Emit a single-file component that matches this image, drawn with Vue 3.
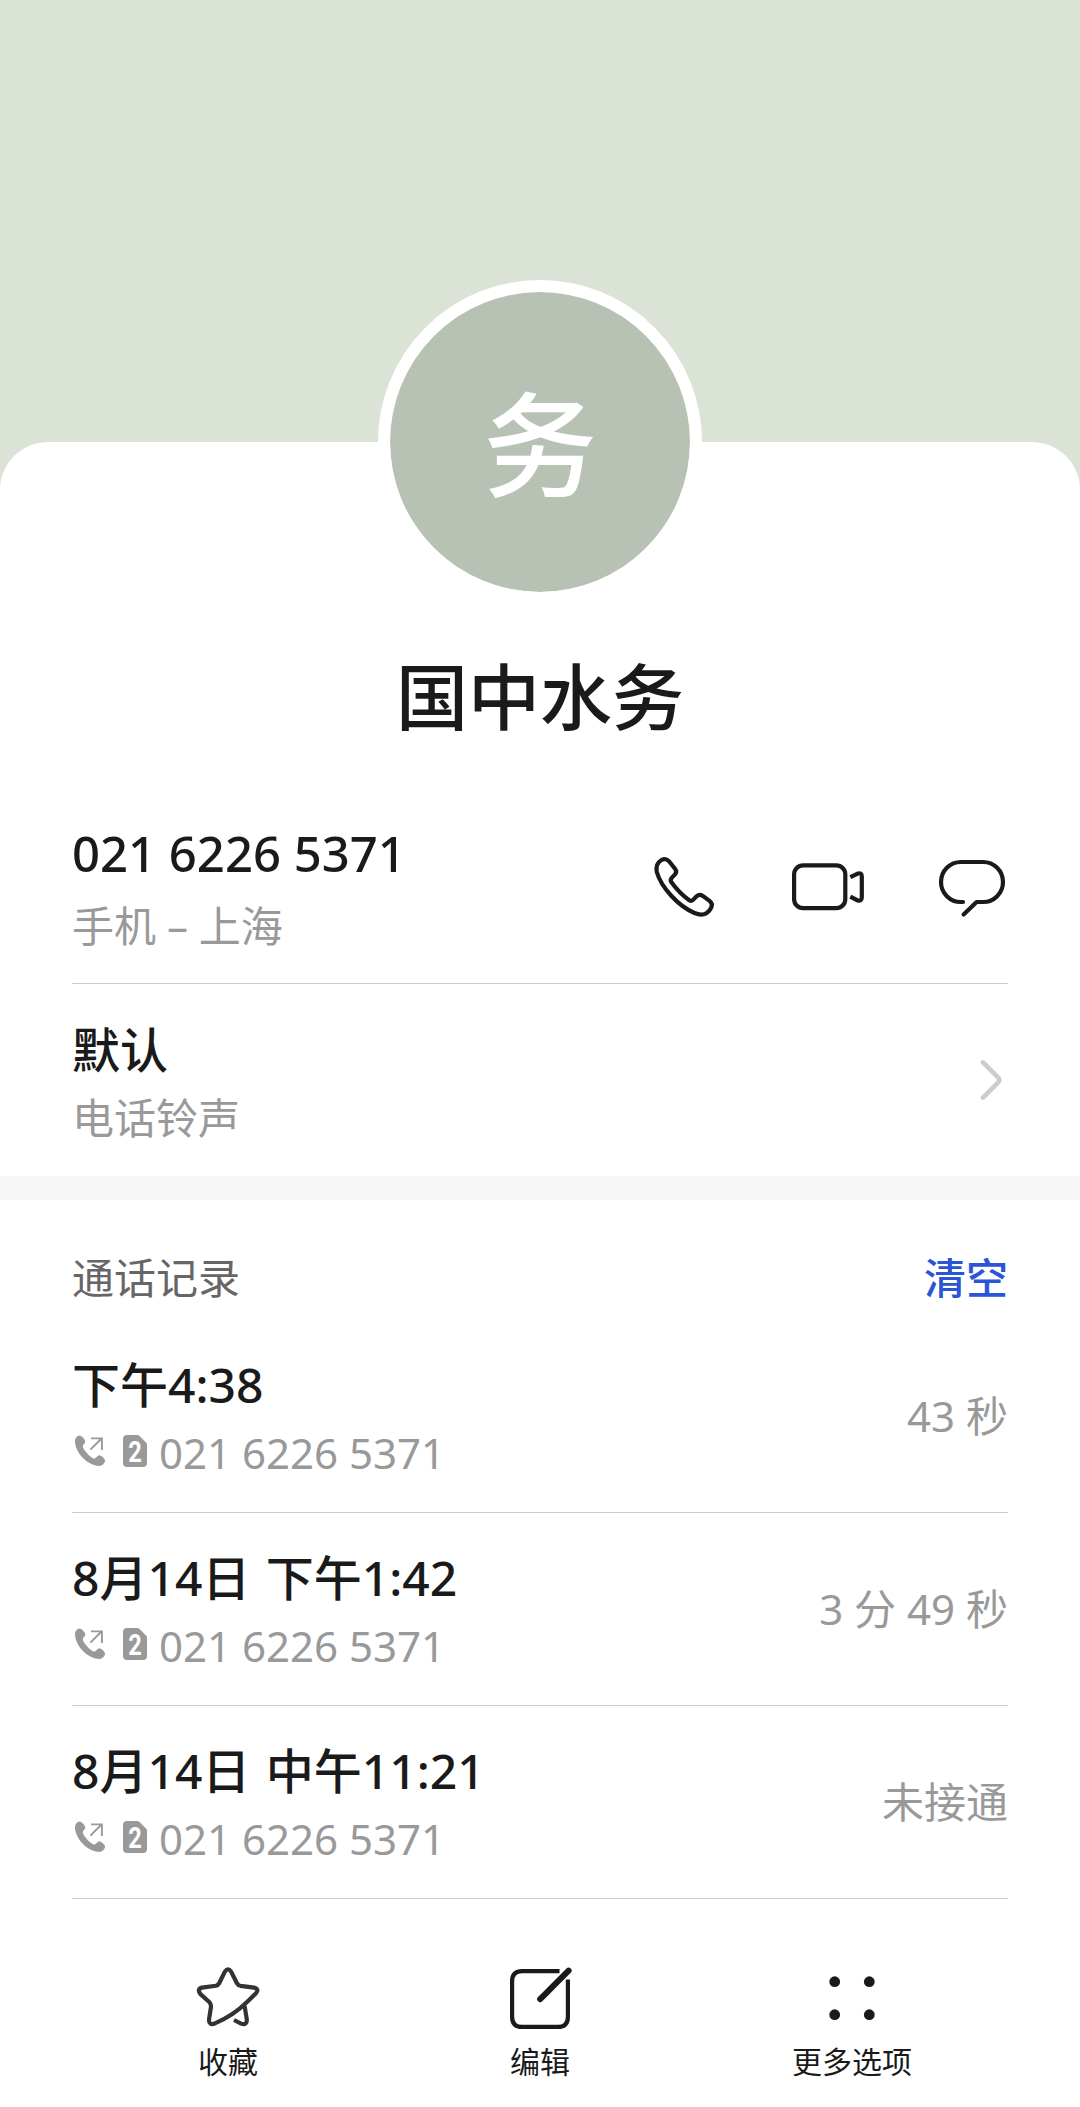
<template>
  <div class="page">
    <header class="cover"></header>

    <main class="sheet">
      <div class="avatar">务</div>
      <h1 class="name">国中水务</h1>

      <section class="phone">
        <div class="phone-text">
          <div class="primary number">{{ phone }}</div>
          <div class="secondary place">手机 – 上海</div>
        </div>
        <div class="actions">
          <button class="icon-btn" aria-label="拨打">
            <svg class="icon" viewBox="0 0 72 72">
              <path d="M21 10.2 L27 17.8 Q29.3 20.6 27 23.4 L23.7 26.8 Q21.8 29 23.6 31.6 Q32 43 41.2 49.2 Q43.6 50.6 45.6 48.4 L48.5 45.4 Q51.5 42.8 54.8 44.9 L61.8 50.2 Q65 52.8 63.2 56.6 C60 63.4 54 65.2 46.5 62 C30 55 13 36 8.8 21 C7.6 15.5 10 11.2 13.5 9 Q17.5 6.8 21 10.2 Z" />
            </svg>
          </button>
          <button class="icon-btn" aria-label="视频通话">
            <svg class="icon" viewBox="0 0 72 72">
              <rect x="2.1" y="14.4" width="51.2" height="42.8" rx="9" />
              <path d="M58.3 26.2 L65.2 22.8 Q69.8 21 69.8 25.6 V46.2 Q69.8 50.8 65.2 49.2 L58.3 45.6" />
            </svg>
          </button>
          <button class="icon-btn" aria-label="发信息">
            <svg class="icon round" viewBox="0 0 72 72">
              <path d="M27 51 H25 A20 20 0 0 1 25 11 H47 A20 20 0 0 1 47 51 H40.6 L27.6 63.6" />
            </svg>
          </button>
        </div>
      </section>

      <section class="ringtone">
        <div class="ringtone-text">
          <div class="primary">默认</div>
          <div class="secondary">电话铃声</div>
        </div>
        <svg class="chevron" viewBox="0 0 24 48">
          <path d="M3 6.4 L18 21.4 Q20.4 24 18 26.6 L3 41.6" />
        </svg>
      </section>

      <div class="band"></div>

      <section class="log">
        <div class="log-head">
          <span>通话记录</span>
          <button class="clear">清空</button>
        </div>

        <div v-for="call in calls" :key="call.time" class="call">
          <div class="call-text">
            <div class="primary time">{{ call.time }}</div>
            <div class="call-meta">
              <svg class="outgoing" viewBox="0 0 30 32">
                <path class="fill" d="M4.5 .6 C7 .6 10.4 5 10.3 6.8 C10.2 8.4 7.6 9.6 7.8 11.8 C9 15.6 14.4 21.6 18.4 23.4 C20.6 24 21.8 21 23.6 20.4 C25.6 19.8 30 23.4 30 25.8 C30 28 27.4 30.9 24.6 30.9 C12 30.9 0 17 0 6 C0 3.4 2.4 .6 4.5 .6 Z" />
                <path d="M15.4 14.6 L26 4 M16 3.4 H27.8 M26.9 2.6 V15" />
              </svg>
              <svg class="sim" viewBox="0 0 24 32">
                <path d="M4 0 H14.2 Q15.6 0 16.6 1 L23 7.4 Q24 8.4 24 9.8 V28 Q24 32 20 32 H4 Q0 32 0 28 V4 Q0 0 4 0 Z" />
                <text x="5.2" y="27.2" textLength="13.6" lengthAdjust="spacingAndGlyphs">2</text>
              </svg>
              <span>{{ phone }}</span>
            </div>
          </div>
          <div class="duration">{{ call.duration }}</div>
        </div>
      </section>
    </main>

    <nav class="toolbar">
      <button class="tool">
        <svg class="icon star" viewBox="0 0 72 72">
          <path d="M32.9 10.6 Q36 6 39.1 10.6 L44.8 22 Q46 24.4 48.4 24.8 L62 26.6 Q67.6 28 64 32.2 L55 41 Q42 54 23.4 62.2 Q16.6 65 17 58.6 L18.9 46.4 Q19.4 43.2 17.2 41 L8.4 33 Q4.6 28 10 26.6 L23.8 24.8 Q26.2 24.3 27.3 22 Z" />
          <path d="M52.6 45 L54.8 58.4 Q55 64.8 49 62.6 L42 59" />
        </svg>
        <span>收藏</span>
      </button>
      <button class="tool">
        <svg class="icon" viewBox="0 0 72 72">
          <path d="M55.5 10.1 H18.1 Q8.1 10.1 8.1 20.1 V55.9 Q8.1 65.9 18.1 65.9 H53.9 Q63.9 65.9 63.9 55.9 V18.4" />
          <path class="pen" d="M36.2 38.2 L64.6 9.6" />
        </svg>
        <span>编辑</span>
      </button>
      <button class="tool">
        <svg class="icon dots" viewBox="0 0 72 72">
          <circle cx="18.7" cy="20.7" r="5.4" />
          <circle cx="53.3" cy="20.7" r="5.4" />
          <circle cx="18.7" cy="53.7" r="5.4" />
          <circle cx="53.3" cy="53.7" r="5.4" />
        </svg>
        <span>更多选项</span>
      </button>
    </nav>
  </div>
</template>

<script setup>
import { ref } from 'vue'

const phone = '021 6226 5371'

const calls = ref([
  { time: '下午4:38', duration: '43 秒' },
  { time: '8月14日 下午1:42', duration: '3 分 49 秒' },
  { time: '8月14日 中午11:21', duration: '未接通' },
])
</script>

<style>
body {
  margin: 0;
  background: #fff;
}
</style>

<style scoped>
.page {
  width: 1080px;
  height: 2107px;
  overflow: hidden;
  display: flex;
  flex-direction: column;
  background: #dbe3d7;
  color: #1a1a1a;
  font-family: 'Noto Sans', 'Noto Sans CJK SC', sans-serif;
}

button {
  padding: 0;
  border: 0;
  background: none;
  color: inherit;
  font: inherit;
}

.cover {
  height: 442px;
  flex: none;
}

.sheet {
  flex: 1;
  display: flex;
  flex-direction: column;
  background: #fff;
  border-radius: 48px 48px 0 0;
}

/* 头像一半压在封面上 */
.avatar {
  width: 300px;
  height: 300px;
  margin: -162px auto 0;
  flex: none;
  border: 12px solid #fff;
  border-radius: 50%;
  background: #b7c2b4;
  background-clip: padding-box;
  color: #fff;
  font-size: 114px;
  font-weight: 500;
  line-height: 303px;
  text-align: center;
}

.name {
  height: 108px;
  margin: 38px 0 0;
  font-size: 72px;
  font-weight: 500;
  line-height: 108px;
  text-align: center;
}

.primary {
  height: 68px;
  font-size: 48px;
  font-weight: 500;
  line-height: 68px;
  white-space: pre;
}

.secondary {
  height: 68px;
  color: #999;
  font-size: 42px;
  line-height: 68px;
}

.number {
  font-size: 49px;
}

.time {
  word-spacing: 3px;
}

.phone {
  height: 166px;
  margin: 67px 72px 0;
  display: flex;
  justify-content: space-between;
  border-bottom: 1px solid #ccc;
}

.phone-text {
  padding-top: 2px;
}

.place {
  padding-top: 5px;
}

.actions {
  display: flex;
  gap: 72px;
  padding-top: 34px;
}

.icon-btn {
  width: 72px;
  height: 72px;
}

.icon {
  display: block;
  width: 72px;
  height: 72px;
  fill: none;
  stroke: #1a1a1a;
  stroke-width: 4.2;
}

.round {
  stroke-linecap: round;
  stroke-linejoin: round;
}

.ringtone {
  height: 192px;
  margin: 0 72px;
  display: flex;
  align-items: center;
  justify-content: space-between;
}

.ringtone-text {
  padding-top: 7px;
}

.chevron {
  width: 24px;
  height: 48px;
  margin-right: 4px;
  fill: none;
  stroke: #ccc;
  stroke-width: 4.6;
  stroke-linecap: round;
}

.band {
  height: 24px;
  flex: none;
  background: #f6f6f6;
}

.log {
  padding: 0 72px;
}

.log-head {
  height: 120px;
  display: flex;
  align-items: center;
  justify-content: space-between;
  color: #666;
  font-size: 42px;
  line-height: 60px;
}

.log-head > * {
  padding-top: 36px;
}

.log-head .clear {
  color: #2a56d5;
  font-weight: 500;
}

.call {
  height: 192px;
  display: flex;
  align-items: center;
  justify-content: space-between;
  border-bottom: 1px solid #ccc;
}

.call-text {
  padding-top: 5px;
}

.call-meta {
  height: 68px;
  display: flex;
  align-items: center;
  color: #999;
  font-size: 42px;
  line-height: 68px;
}

.outgoing {
  width: 30px;
  height: 32px;
  margin: -3px 18px 0 3px;
  fill: none;
  stroke: #999;
  stroke-width: 1.9;
}

.outgoing .fill {
  fill: #999;
  stroke: none;
}

.sim {
  width: 24px;
  height: 32px;
  margin: -3px 12px 0 0;
  overflow: visible;
  fill: #999;
}

.sim text {
  fill: #fff;
  font-family: Roboto, sans-serif;
  font-size: 30px;
  font-weight: 700;
}

.duration {
  color: #999;
  font-size: 42px;
  line-height: 68px;
}

.toolbar {
  height: 160px;
  padding: 0 72px;
  flex: none;
  display: grid;
  grid-template-columns: repeat(3, 1fr);
  background: #fff;
}

.tool {
  display: flex;
  flex-direction: column;
  align-items: center;
  padding-top: 14px;
  font-size: 30px;
  font-weight: 400;
  line-height: 44px;
}

.tool span {
  margin-top: 7px;
}

.star {
  stroke: #333;
}

.pen {
  stroke-width: 6;
  stroke-linecap: round;
}

.dots {
  fill: #1a1a1a;
  stroke: none;
}
</style>
